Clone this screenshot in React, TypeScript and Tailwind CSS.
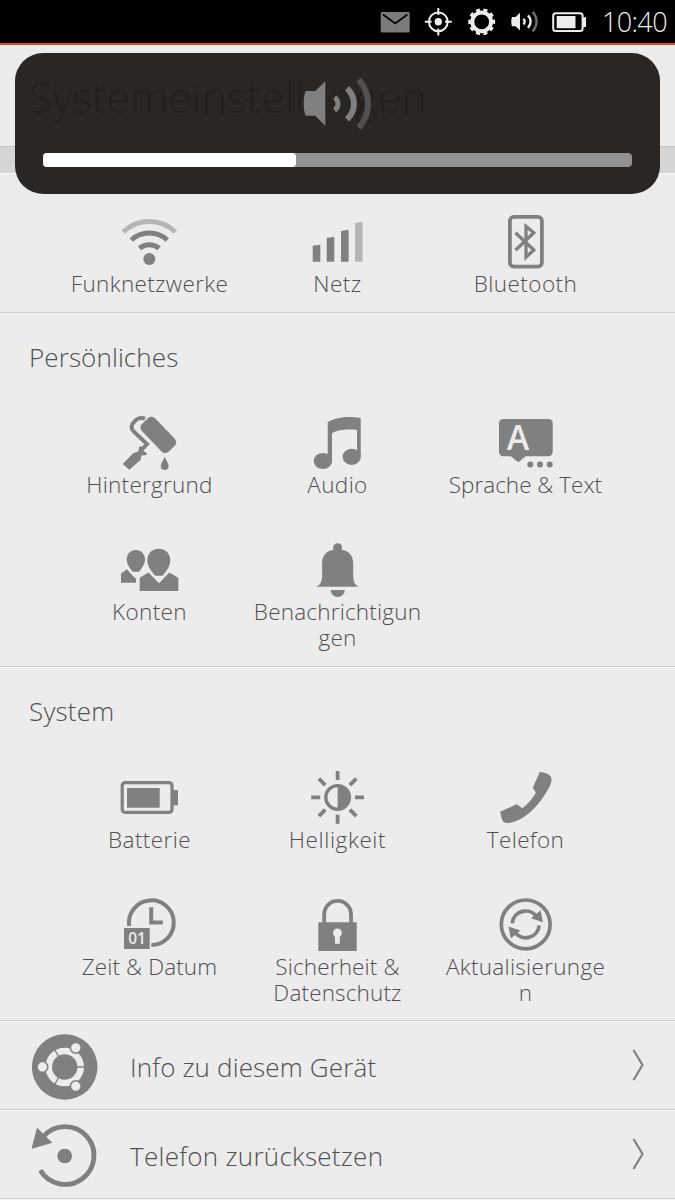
import type { ReactNode } from "react";

type Tile = {
  label: string;
  // longer labels are broken by hand, one entry per line
  more?: string;
  tracking: string;
  icon: ReactNode;
};

function TileIcon({ children }: { children: ReactNode }) {
  return (
    <svg viewBox="1 0 60 60" className="size-[60px] shrink-0 fill-[#808080]" aria-hidden="true">
      {children}
    </svg>
  );
}

const network: Tile[] = [
  {
    label: "Funknetzwerke",
    tracking: "tracking-[0.35px]",
    icon: (
      <TileIcon>
        <circle cx="30.3" cy="47" r="6" />
        <g fill="none" stroke="#808080" strokeWidth="5">
          <path d="M20.5 36.2A15.5 15.5 0 0 1 40.1 36.2" />
          <path d="M12.3 28A26.6 26.6 0 0 1 48.3 28" />
          <path d="M4.3 20A37.4 37.4 0 0 1 56.3 20" stroke="#b5b5b5" />
        </g>
      </TileIcon>
    ),
  },
  {
    label: "Netz",
    tracking: "tracking-[0.5px]",
    icon: (
      <TileIcon>
        <path d="M5.7 33.7 13.3 32.7V49.7H5.7ZM19.7 26 27.3 24.7V49.7H19.7ZM34 19 41.6 17.7V49.7H34Z" />
        <path d="M48 11 55.6 10V49.7H48Z" fill="#b5b5b5" />
      </TileIcon>
    ),
  },
  {
    label: "Bluetooth",
    tracking: "tracking-[0.45px]",
    icon: (
      <TileIcon>
        <g fill="none" stroke="#808080">
          <rect x="14.9" y="4.8" width="32" height="49.8" rx="4" strokeWidth="3.8" />
          <path d="M20.5 20.7 38.8 38 31 45.2V14.2L38.8 20.8 20.5 38.3" strokeWidth="3.3" />
        </g>
      </TileIcon>
    ),
  },
];

const personal: Tile[] = [
  {
    label: "Hintergrund",
    tracking: "tracking-[0.25px]",
    icon: (
      <TileIcon>
        <rect x="20.2" y="12.6" width="38.4" height="18.4" rx="5" transform="rotate(46 39.2 21.8)" />
        <path
          d="M26 5.6C20 3.6 17 6.5 14.3 9.8 11.8 13 12.4 16.2 14.6 18.4L28 31 21 38.5"
          fill="none"
          stroke="#808080"
          strokeWidth="3.9"
        />
        <path d="M3.7 51 14 40.2 19.2 38.6 20.3 33.6 22.6 33.4 24.6 38 28 40.3 27.4 42 22.4 42.6 21.6 47 10.3 56.7Z" />
        <path d="M45.7 43.5C47 47.5 49.6 49.8 49.6 53A3.9 3.9 0 0 1 41.8 53C41.8 49.8 44.4 47.5 45.7 43.5Z" />
      </TileIcon>
    ),
  },
  {
    label: "Audio",
    tracking: "tracking-[0.4px]",
    icon: (
      <TileIcon>
        <path d="M20.7 9.3C29 4 42 3 53.7 5V44H50V17C42 16 31 16.4 25 20.3V48H20.7Z" />
        <ellipse cx="15.9" cy="48" rx="9.2" ry="8.1" />
        <ellipse cx="44.7" cy="43.8" rx="9.1" ry="8.1" />
      </TileIcon>
    ),
  },
  {
    label: "Sprache & Text",
    tracking: "tracking-[0px]",
    icon: (
      <TileIcon>
        <rect x="4" y="6" width="53.7" height="37.2" rx="4.2" />
        <path d="M15.5 43H31L23.3 49.2Z" />
        <circle cx="35.3" cy="51.4" r="3" />
        <circle cx="45" cy="51.4" r="3" />
        <circle cx="54.7" cy="51.4" r="3" />
        <text
          x="23"
          y="37"
          textAnchor="middle"
          fill="#ececec"
          className="font-['Open_Sans',sans-serif] text-[34px] font-semibold"
        >
          A
        </text>
      </TileIcon>
    ),
  },
  {
    label: "Konten",
    tracking: "tracking-[0.4px]",
    icon: (
      <TileIcon>
        <path d="M16.8 10C22.3 10 26 14.2 26 19.3 26 24.5 22.5 28.6 20 31.7H13.7C11.2 28.6 7.7 24.5 7.7 19.3 7.7 14.2 11.4 10 16.8 10Z" />
        <path d="M39.8 8.7C46.8 8.7 51.3 13.8 51.3 20.2 51.3 26.6 46.8 31.8 43.6 35.7H36.2C33 31.8 28.3 26.6 28.3 20.2 28.3 13.8 32.8 8.7 39.8 8.7Z" />
        <path d="M2 42.7V33.4L8 29.3 12.6 34.6 17 38.8V42.7Z" />
        <path d="M20.7 51V37.8L29.6 32.4 40 43.2 50.3 32.4 59.3 37.8V51Z" />
      </TileIcon>
    ),
  },
  {
    label: "Benachrichtigun",
    more: "gen",
    tracking: "tracking-[0.2px]",
    icon: (
      <TileIcon>
        <circle cx="30.6" cy="7.7" r="4.5" />
        <path d="M30.6 9.6C40 9.6 46 14 46.2 23V36C46.4 42 47.6 44.6 51.7 46.8H9.3C13.6 44.6 14.8 42 15.1 36V23C15.3 14 21.2 9.6 30.6 9.6Z" />
        <path d="M23.6 50H37.8C37.6 54 34.5 56.9 30.7 56.9 26.9 56.9 23.8 54 23.6 50Z" />
      </TileIcon>
    ),
  },
];

const system: Tile[] = [
  {
    label: "Batterie",
    tracking: "tracking-[0.4px]",
    icon: (
      <TileIcon>
        <rect x="3.2" y="14.6" width="49.8" height="29.8" rx="3" fill="none" stroke="#808080" strokeWidth="3.2" />
        <path d="M54 22H59V37.3H54ZM8 20H40.7V39.8H8Z" />
      </TileIcon>
    ),
  },
  {
    label: "Helligkeit",
    tracking: "tracking-[0.6px]",
    icon: (
      <TileIcon>
        <circle cx="30.6" cy="29.4" r="11.8" fill="none" stroke="#808080" strokeWidth="3.4" />
        <path d="M30.6 18A11.4 11.4 0 0 1 30.6 40.8Z" />
        <path
          d="M30.6 3V12M30.6 46.8V55.8M4.2 29.4H13.2M48 29.4H57M11.9 10.7 18.3 17.1M42.9 41.7 49.3 48.1M49.3 10.7 42.9 17.1M18.3 41.7 11.9 48.1"
          fill="none"
          stroke="#808080"
          strokeWidth="3.8"
        />
      </TileIcon>
    ),
  },
  {
    label: "Telefon",
    tracking: "tracking-[0.35px]",
    icon: (
      <TileIcon>
        <path d="M44.7 4.1C49.5 4.4 53.5 5.8 56 8.7 57.2 12.5 56 16 53.5 20.5 47.5 31.5 39 42.5 28.5 49.3 23 52.8 17.5 55 12.3 55.1 9.3 55 7.5 53.5 6.8 51L5 43.7 21.7 36.3 27.5 40.2C32.5 36.5 38 30.5 40.8 24.6L37.8 19.7Z" />
      </TileIcon>
    ),
  },
  {
    label: "Zeit & Datum",
    tracking: "tracking-[0.1px]",
    icon: (
      <TileIcon>
        <g fill="none" stroke="#808080" strokeWidth="4">
          <path d="M10.2 31A22.4 22.4 0 1 1 32.3 50.1" />
          <path d="M32.2 12.3V27.6H43.8" />
        </g>
        <path d="M5 33H30.7V54H5Z" />
        <text
          x="18"
          y="49.4"
          textAnchor="middle"
          fill="#ececec"
          className="font-['Open_Sans',sans-serif] text-[15.5px] font-semibold"
        >
          01
        </text>
      </TileIcon>
    ),
  },
  {
    label: "Sicherheit &",
    more: "Datenschutz",
    tracking: "tracking-[0.15px]",
    icon: (
      <TileIcon>
        <path d="M17.2 28V19.3A13.4 13.4 0 0 1 44 19.3V28" fill="none" stroke="#808080" strokeWidth="3.8" />
        <path d="M11.3 27.3H49.7V56H11.3Z" />
        <path d="M30.4 33.6A4.5 4.5 0 0 1 32.8 41.8V48.8H28V41.8A4.5 4.5 0 0 1 30.4 33.6Z" fill="#ececec" />
      </TileIcon>
    ),
  },
  {
    label: "Aktualisierunge",
    more: "n",
    tracking: "tracking-[0.3px]",
    icon: (
      <TileIcon>
        <g fill="none" stroke="#808080" strokeWidth="3.7">
          <circle cx="30.7" cy="29.4" r="24.4" />
          <path d="M17.2 28.3A13.5 13.5 0 0 1 42 22.2" />
          <path d="M44.2 30.5A13.5 13.5 0 0 1 19.4 36.6" />
        </g>
        <path d="M45.6 15.3 47.9 27.3 36 23.3ZM15.8 43.5 13.5 31.5 25.4 35.5Z" />
      </TileIcon>
    ),
  },
];

function TileGrid({ tiles }: { tiles: Tile[] }) {
  return (
    <div className="mx-auto grid w-[564px] auto-rows-[127px] grid-cols-3">
      {tiles.map((tile) => (
        <a key={tile.label} href="#" className="flex flex-col items-center">
          {tile.icon}
          <span
            className={`-mt-px block text-center text-[22.5px] leading-[26px] whitespace-nowrap text-[#505050] ${tile.tracking}`}
          >
            {tile.label}
            {tile.more && (
              <>
                <br />
                {tile.more}
              </>
            )}
          </span>
        </a>
      ))}
    </div>
  );
}

function StatusBar() {
  return (
    <div className="flex h-[45px] items-center border-b-2 border-[#e24a15] bg-black pr-2 text-[#ededed]">
      <svg viewBox="370 0 220 43" className="ml-[370px] h-[43px] w-[220px] shrink-0" fill="#ededed" aria-hidden="true">
        <rect x="380.7" y="12" width="29" height="20.4" rx="1.5" fill="#7b7b7b" />
        <path d="M383 14.5 395.2 23.5 407.4 14.5" fill="none" stroke="#000" strokeWidth="1.8" />

        <g fill="none" stroke="#ededed" strokeWidth="2">
          <circle cx="438.3" cy="21.8" r="9.4" />
          <path d="M438.3 8V15M438.3 28.6V35.4M424.8 21.8H431.6M445 21.8H451.8" />
        </g>
        <circle cx="438.3" cy="21.8" r="3.7" />

        <g fill="none" stroke="#ededed">
          <circle cx="481.7" cy="21.8" r="9.4" strokeWidth="4" />
          <circle cx="481.7" cy="21.8" r="12" strokeWidth="3" pathLength="100" strokeDasharray="5.4 4.6" strokeDashoffset="-2.3" transform="rotate(-18 481.7 21.8)" />
        </g>

        <path d="M512 17H515.5L520 12.8V30.4L515.5 26.2H512C511 24 511 19.2 512 17Z" />
        <g fill="none" stroke="#ededed" strokeWidth="2.4">
          <path d="M523.3 18.9A3.4 3.4 0 0 1 523.3 24.3" />
          <path d="M528 15.3A9 9 0 0 1 528 27.9" />
          <path d="M532.6 11.9A14 14 0 0 1 532.6 31.3" stroke="#6e6e6e" />
        </g>

        <rect x="553.2" y="13.3" width="29.4" height="17.8" rx="2.5" fill="none" stroke="#ededed" strokeWidth="2" />
        <path d="M556.7 16H575.5V28.2H556.7ZM583 17.3H586V27H583Z" />
      </svg>
      <span className="ml-auto text-[27px] leading-[43px] tracking-[-0.6px]">10:40</span>
    </div>
  );
}

function VolumeOverlay() {
  return (
    <div className="absolute top-[53px] left-[15px] flex h-[141px] w-[645px] flex-col items-center rounded-[28px] bg-[#221e1b]/[0.965] px-7 pt-[25px]">
      <svg viewBox="303 78 70 52" className="h-[52px] w-[70px]" aria-hidden="true">
        <path d="M305.8 91H315.3L325.3 81.3V125.8L315.3 115.8H305.8C303 110 303 97 305.8 91Z" fill="#808080" />
        <g fill="none" stroke="#808080">
          <path d="M334.6 97.3A8 8 0 0 1 334.6 110.3" strokeWidth="5" />
          <path d="M347 88.3A21 21 0 0 1 347 119.3" strokeWidth="6" />
          <path d="M358.7 79.7A35.6 35.6 0 0 1 358.7 127.7" stroke="#525150" strokeWidth="6" />
        </g>
      </svg>
      <div className="mt-[23px] h-[14px] w-[589px] shrink-0 rounded bg-[#919191]">
        <div className="h-full w-[253px] rounded bg-white" />
      </div>
    </div>
  );
}

function Row({ label, tracking, icon }: { label: string; tracking: string; icon: ReactNode }) {
  return (
    <a href="#" className="flex h-[89px] items-center border-t border-[#cdcdcd] pr-[30px] pl-[32px] inset-shadow-[0_1px_#f6f6f6]">
      <svg viewBox="0 0 66 66" className="mt-[3px] size-[66px] shrink-0 fill-[#808080]" aria-hidden="true">
        {icon}
      </svg>
      <span className={`mt-[5px] ml-8 text-[26px] whitespace-nowrap text-[#505050] ${tracking}`}>{label}</span>
      <svg viewBox="0 0 14 34" className="ml-auto h-[34px] w-[14px]" aria-hidden="true">
        <path d="M2.5 2 11.5 17 2.5 32" fill="none" stroke="#808080" strokeWidth="2.2" />
      </svg>
    </a>
  );
}

export default function App() {
  return (
    <div className="relative flex h-[1200px] w-[675px] flex-col overflow-hidden bg-[#ececec] font-['Open_Sans',sans-serif] font-light">
      <StatusBar />

      <header className="h-[101px] shrink-0 pl-[29px]">
        <h1 className="pt-[22px] text-[43px] leading-[60px] text-[#4a4a4a]">Systemeinstellungen</h1>
      </header>
      <div className="h-[28px] shrink-0 border-t border-b border-t-[#c4c4c4] border-b-[#f8f8f8] bg-[#d5d5d5]" />

      <section className="h-[138px] shrink-0 pt-[38px]">
        <TileGrid tiles={network} />
      </section>

      <section className="h-[354px] shrink-0 border-t border-[#cdcdcd] inset-shadow-[0_1px_#f6f6f6]">
        <h2 className="pt-[26px] pb-[38px] pl-[29px] text-[26px] leading-9 tracking-[0.1px] text-[#505050]">
          Persönliches
        </h2>
        <TileGrid tiles={personal} />
      </section>

      <section className="h-[354px] shrink-0 border-t border-[#cdcdcd] inset-shadow-[0_1px_#f6f6f6]">
        <h2 className="pt-[26px] pb-[39px] pl-[29px] text-[26px] leading-9 tracking-[0.2px] text-[#505050]">
          System
        </h2>
        <TileGrid tiles={system} />
      </section>

      <Row
        label="Info zu diesem Gerät"
        tracking="tracking-[0.15px]"
        icon={
          <>
            <circle cx="32.7" cy="33" r="32.8" />
            <circle cx="32.7" cy="33" r="16" fill="none" stroke="#ececec" strokeWidth="6.6" />
            <path d="M42 33H54M28 24.9 22 14.5M28 41.1 22 51.5" stroke="#808080" strokeWidth="1.3" />
            <g fill="#ececec" stroke="#808080" strokeWidth="1.5">
              <circle cx="10.4" cy="33" r="5.4" />
              <circle cx="43.8" cy="13.8" r="5.4" />
              <circle cx="43.8" cy="52.2" r="5.4" />
            </g>
          </>
        }
      />
      <Row
        label="Telefon zurücksetzen"
        tracking="tracking-[0.28px]"
        icon={
          <>
            <circle cx="32.7" cy="33" r="7.3" />
            <path d="M8.3 47.3A28.9 28.9 0 1 0 11.7 13.1" fill="none" stroke="#808080" strokeWidth="4.8" />
            <path d="M5 4.7 20.4 19.7-.6 26Z" />
          </>
        }
      />
      <div className="h-[2px] shrink-0 border-t border-[#cdcdcd] bg-[#f6f6f6]" />

      <VolumeOverlay />
    </div>
  );
}
